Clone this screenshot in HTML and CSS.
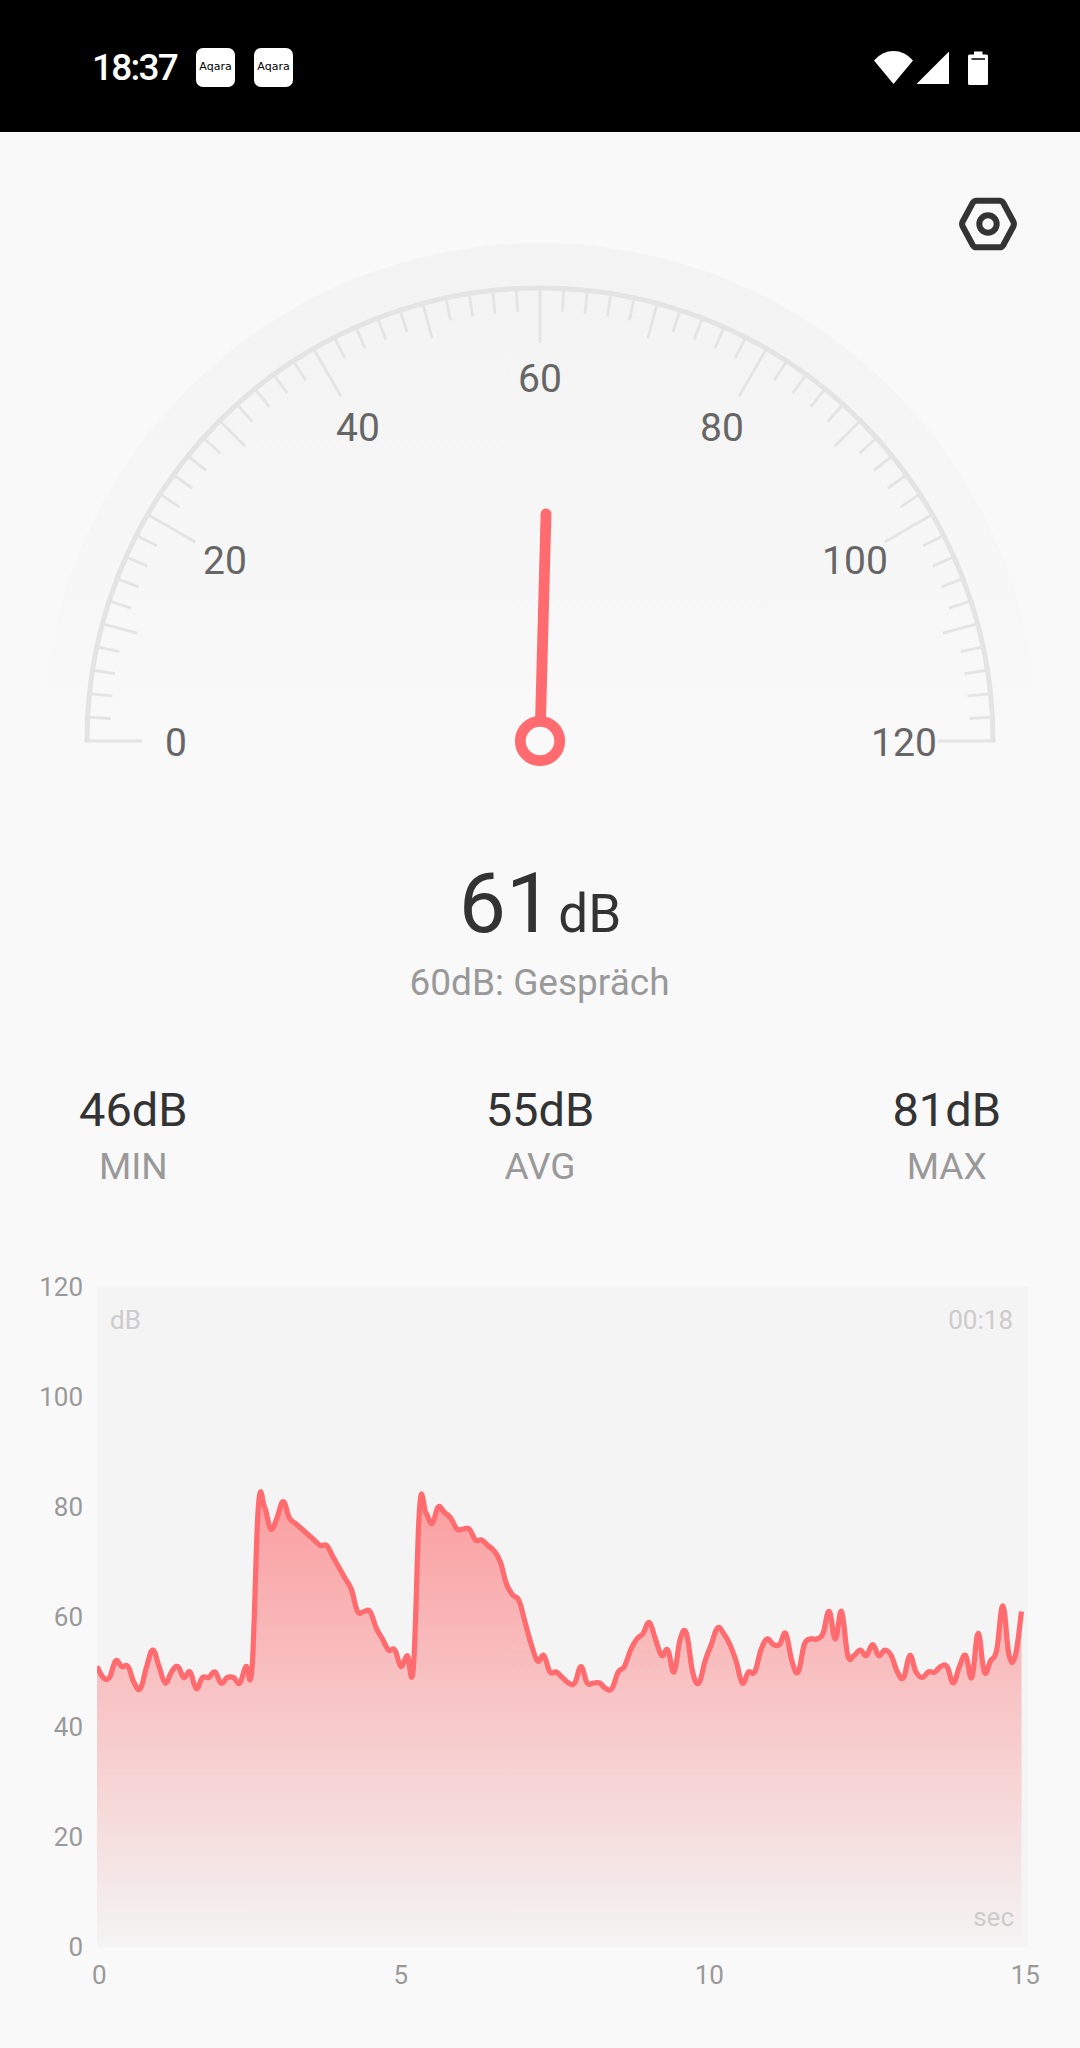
FILE: index.html
```html
<!DOCTYPE html>
<html lang="de">
<head>
  <meta charset="UTF-8" />
  <meta name="viewport" content="width=device-width, initial-scale=1.0"/>
  <title>Schallpegelmesser</title>
  <link rel="stylesheet" href="styles.css">
</head>
<body>
  <!-- status bar -->
  <header class="status-bar">
    <div class="status-left">
      <span class="clock">18:37</span>
      <span class="app-icon">Aqara</span>
      <span class="app-icon">Aqara</span>
    </div>
    <svg class="status-icons" width="116" height="36" viewBox="0 0 116 36">
      <path d="M0 10.5 Q8 1 19.500 1 Q31 1 39 10.500 L19.500 34 Z"/>
      <path d="M42.500 34 L75 34 L75 1.500 Z"/>
      <path d="M100 1.500 h8.500 v3 h4 q1.500 0 1.500 1.500 v27.500 q0 1.500 -1.500 1.500 h-17 q-1.500 0 -1.500 -1.500 v-27.500 q0 -1.500 1.500 -1.500 h4.500 Z"/>
      <path class="battery-line" d="M97.500 9 H111"/>
    </svg>
  </header>

  <main class="meter">
    <div class="toolbar">
      <svg class="settings" width="60" height="60" viewBox="-30 -30 60 60">
        <path d="M-11.500 -23.300 H11.500 Q14 -23.300 15.200 -21.200 L25.300 -2.500 Q26.600 0 25.300 2.500 L15.200 21.200 Q14 23.300 11.500 23.300 H-11.500 Q-14 23.300 -15.200 21.200 L-25.300 2.500 Q-26.600 0 -25.300 -2.500 L-15.200 -21.200 Q-14 -23.300 -11.500 -23.300 Z"/>
        <circle r="8.700"/>
      </svg>
    </div>

    <!-- gauge, origin in the needle hub -->
    <svg class="gauge" width="1080" height="530" viewBox="-540 -500 1080 530">
      <defs>
        <linearGradient id="dial" x1="0" y1="0" x2="0" y2="1">
          <stop offset="0" stop-color="#f3f3f3"/>
          <stop offset="1" stop-color="#f9f9f9"/>
        </linearGradient>
      </defs>
      <path fill="url(#dial)" d="M-498 0 A498 498 0 0 1 498 0 Z"/>
      <path class="arc" d="M-453 0 A453 453 0 0 1 453 0"/>
      <g id="ticks" class="ticks"></g>
      <g class="gauge-labels">
        <text x="-364" y="14.500">0</text>
        <text x="-315" y="-167.500">20</text>
        <text x="-182" y="-300">40</text>
        <text x="0" y="-349.500">60</text>
        <text x="182" y="-300">80</text>
        <text x="315" y="-167.500">100</text>
        <text x="364" y="14.500">120</text>
      </g>
      <g class="needle">
        <path d="M0.500 -20 L6 -227"/>
        <circle r="19.700"/>
      </g>
    </svg>

    <div class="reading"><span class="value">61</span><span class="unit">dB</span></div>
    <div class="caption">60dB: Gespräch</div>

    <div class="stats">
      <div class="stat"><span class="stat-value">46dB</span><span class="stat-label">MIN</span></div>
      <div class="stat"><span class="stat-value">55dB</span><span class="stat-label">AVG</span></div>
      <div class="stat"><span class="stat-value">81dB</span><span class="stat-label">MAX</span></div>
    </div>

    <div class="chart">
      <div class="y-axis">
        <span>120</span><span>100</span><span>80</span><span>60</span><span>40</span><span>20</span><span>0</span>
      </div>
      <svg class="plot" width="931" height="660" viewBox="0 0 931 660">
        <defs>
          <linearGradient id="fade" gradientUnits="userSpaceOnUse" x1="0" y1="0" x2="0" y2="660">
            <stop offset="0" stop-color="#ff6b6e" stop-opacity="0.92"/>
            <stop offset="1" stop-color="#ff6b6e" stop-opacity="0"/>
          </linearGradient>
        </defs>
        <path id="area" fill="url(#fade)"/>
        <path id="line" class="line"/>
        <text x="13" y="42">dB</text>
        <text class="end" x="916" y="42">00:18</text>
        <text class="end" x="917" y="639">sec</text>
      </svg>
    </div>
    <div class="x-axis">
      <span>0</span><span>5</span><span>10</span><span>15</span>
    </div>
  </main>

  <script src="script.js"></script>
</body>
</html>
```

FILE: styles.css
```css
body {
  margin: 0;
  background-color: #f9f9f9;
  color: #333;
  font-family: Roboto, 'Liberation Sans', sans-serif;
}
svg {
  display: block;
}
.status-bar {
  display: flex;
  justify-content: space-between;
  align-items: center;
  box-sizing: border-box;
  height: 132px;
  padding: 3px 90px 0 92px;
  background-color: #000;
  color: #fff;
}
.status-left {
  display: flex;
  align-items: center;
}
.clock {
  width: 104px;
  font-size: 37px;
  font-weight: 500;
  letter-spacing: -1.8px;
}
.app-icon {
  width: 39px;
  height: 39px;
  margin-right: 19px;
  border-radius: 7px;
  background-color: #fff;
  color: #000;
  font-family: 'DejaVu Sans', sans-serif;
  font-size: 11px;
  line-height: 38px;
  text-align: center;
}
.status-icons {
  fill: #fff;
}
.battery-line {
  stroke: #000;
  stroke-width: 1.5;
}
.toolbar {
  display: flex;
  justify-content: flex-end;
  padding: 62px 62px 0 0;
  height: 47px;
}
.settings {
  fill: none;
  stroke: #333;
  stroke-width: 6;
}
.arc {
  fill: none;
  stroke: #e4e4e4;
  stroke-width: 5;
}
.ticks {
  stroke: #e4e4e4;
  stroke-width: 2.8;
}
.gauge-labels {
  fill: #666;
  font-size: 39px;
  text-anchor: middle;
}
.needle {
  fill: #f9f9f9;
  stroke: #ff6b6e;
  stroke-width: 10.8;
  stroke-linecap: round;
}
.reading {
  display: flex;
  justify-content: center;
  align-items: baseline;
  gap: 5px;
  margin-top: 88px;
  line-height: 90px;
}
.value {
  font-size: 84px;
}
.unit {
  font-size: 53px;
}
.caption {
  margin-top: 2px;
  padding-right: 1px;
  color: #999;
  font-size: 37px;
  line-height: 44px;
  text-align: center;
}
.stats {
  display: flex;
  justify-content: space-between;
  margin: 77px 79px 0;
}
.stat {
  display: flex;
  flex-direction: column;
  align-items: center;
  gap: 1px;
}
.stat-value {
  font-size: 47px;
  line-height: 56px;
}
.stat-label {
  color: #999;
  font-size: 37px;
  line-height: 56px;
}
.chart {
  display: flex;
  margin-top: 77px;
}
.y-axis {
  display: flex;
  flex-direction: column;
  justify-content: space-between;
  width: 83px;
  height: 690px;
  margin-right: 14px;
  color: #999;
  font-size: 26px;
  line-height: 30px;
  text-align: right;
}
.plot {
  margin-top: 15px;
  background-color: #f4f4f4;
}
.plot text {
  fill: #ccc;
  font-size: 26px;
}
.plot .end {
  text-anchor: end;
}
.line {
  fill: none;
  stroke: #ff6b6e;
  stroke-width: 5.2;
}
.x-axis {
  display: flex;
  justify-content: space-between;
  margin: -2px 40px 0 92px;
  color: #999;
  font-size: 26px;
  line-height: 30px;
}
```

FILE: script.js
```js
const svgNs = 'http://www.w3.org/2000/svg';

// one tick every 2 dB = 3 degrees, longer ones at 10 and 20 dB
const ticks = document.getElementById('ticks');
for (let i = 0; i <= 60; i++) {
  const angle = Math.PI + (i * Math.PI) / 60;
  const inner = i % 10 === 0 ? 398 : i % 5 === 0 ? 417 : 430;
  const tick = document.createElementNS(svgNs, 'line');
  tick.setAttribute('x1', 455.5 * Math.cos(angle));
  tick.setAttribute('y1', 455.5 * Math.sin(angle));
  tick.setAttribute('x2', inner * Math.cos(angle));
  tick.setAttribute('y2', inner * Math.sin(angle));
  ticks.appendChild(tick);
}

// measured levels in dB, ten per second
const levels = [
  51, 49, 49, 52, 51, 51, 48, 47, 51, 54, 51, 48, 50, 51, 49,
  50, 47, 49, 49, 50, 48, 49, 49, 48, 51, 51, 80, 80, 76, 78,
  81, 78, 77, 76, 75, 74, 73, 73, 71, 69, 67, 65, 61, 61, 61,
  58, 56, 54, 54, 51, 53, 51, 80, 79, 77, 80, 79, 78, 76, 76,
  76, 74, 74, 73, 72, 70, 66, 64, 63, 59, 55, 52, 53, 50, 50,
  49, 48, 48, 51, 48, 48, 48, 47, 47, 50, 51, 54, 56, 57, 59,
  56, 53, 54, 50, 56, 57, 50, 48, 52, 55, 58, 57, 55, 52, 48,
  50, 50, 54, 56, 55, 55, 57, 52, 50, 55, 56, 56, 57, 61, 56,
  61, 53, 53, 54, 53, 55, 53, 54, 53, 50, 49, 53, 50, 49, 50,
  50, 51, 51, 48, 51, 53, 49, 57, 50, 52, 54, 62, 53, 53, 61
];
const step = 924.5 / (levels.length - 1);
const points = levels.map((db, i) => [i * step, 660 - db * 5.5]);
const at = (i) => points[Math.max(0, Math.min(points.length - 1, i))];
const smooth = 0.2;

let d = `M${points[0]}`;
for (let i = 1; i < points.length; i++) {
  const [x0, y0] = at(i - 1);
  const [x1, y1] = at(i);
  const c1 = [x0 + (x1 - at(i - 2)[0]) * smooth, y0 + (y1 - at(i - 2)[1]) * smooth];
  const c2 = [x1 - (at(i + 1)[0] - x0) * smooth, y1 - (at(i + 1)[1] - y0) * smooth];
  d += ` C${c1} ${c2} ${x1},${y1}`;
}
document.getElementById('line').setAttribute('d', d);
document.getElementById('area').setAttribute('d', `${d} V660 H0 Z`);
```
